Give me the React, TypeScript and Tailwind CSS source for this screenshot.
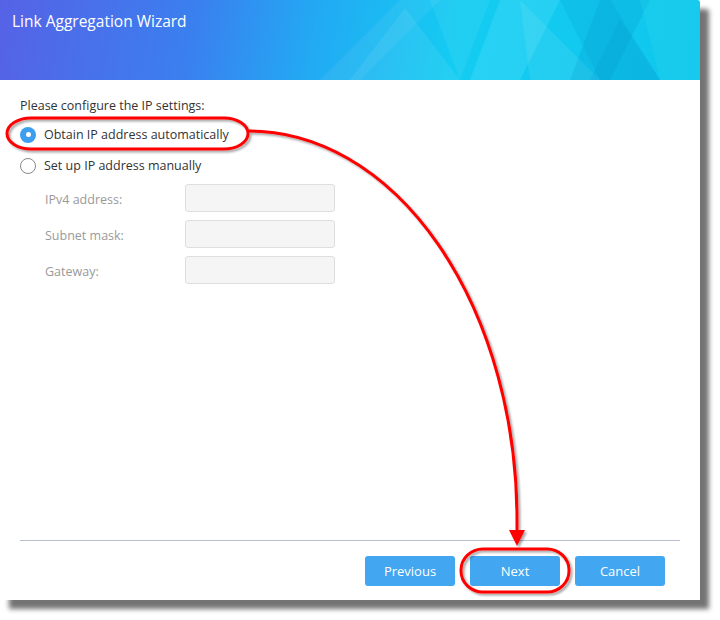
import React from "react";

function Radio({ checked, label }: { checked: boolean; label: string }) {
  return (
    <div className="flex items-center h-[31px]">
      {checked ? (
        <span className="w-4 h-4 rounded-full bg-[#3d9ef0] flex items-center justify-center">
          <span className="w-[5px] h-[5px] rounded-full bg-white" />
        </span>
      ) : (
        <span className="w-4 h-4 rounded-full border border-[#8a8a8a] bg-white" />
      )}
      <span className="ml-2 text-[12.5px] text-[#333] pt-[2px]">{label}</span>
    </div>
  );
}

function Field({ label }: { label: string }) {
  return (
    <div className="flex items-center h-[28px]">
      <span className="w-[165px] pl-[25px] pt-[4px] text-[12.5px] text-[#9a9a9a]">{label}</span>
      <div className="w-[150px] h-[28px] rounded-[3px] border border-[#dedede] bg-[#f5f5f5]" />
    </div>
  );
}

function Btn({ label }: { label: string }) {
  return (
    <button className="w-[90px] h-[30px] rounded-[3px] bg-[#42a6f0] text-white text-[13px] pt-[2px]">
      {label}
    </button>
  );
}

export default function App() {
  return (
    <div
      className="relative w-[720px] h-[620px] bg-white overflow-hidden"
      style={{ fontFamily: '"Open Sans", "Noto Sans", sans-serif' }}
    >
      <div className="w-[700px] h-[600px] bg-white flex flex-col shadow-[9px_9px_5px_rgba(0,0,0,0.55)] rounded-tr-[3px]">
        <div className="relative h-[80px] overflow-hidden rounded-tr-[3px] bg-[linear-gradient(100deg,#5662e6_0%,#3a80ef_28%,#22aaf3_45%,#14ccf2_65%,#0fc6ec_100%)]">
          <svg className="absolute inset-0" width="700" height="80" viewBox="0 0 700 80">
            <polygon points="400,0 440,0 360,80 320,80" fill="#ffffff" opacity="0.06" />
            <polygon points="405,8 460,80 350,80" fill="#ffffff" opacity="0.07" />
            <polygon points="430,0 490,0 460,80" fill="#ffffff" opacity="0.06" />
            <polygon points="500,0 560,0 520,80 470,80" fill="#7ff0ff" opacity="0.18" />
            <polygon points="520,0 600,80 530,80" fill="#ffffff" opacity="0.08" />
            <polygon points="560,0 610,0 660,80 600,80" fill="#0090c8" opacity="0.15" />
            <polygon points="600,0 650,0 610,80 570,80" fill="#0088c0" opacity="0.18" />
            <polygon points="640,0 700,0 700,80 660,80" fill="#30d8f0" opacity="0.25" />
            <polygon points="620,20 660,80 590,80" fill="#0090c8" opacity="0.15" />
          </svg>
          <div className="relative pl-3 pt-[10px] text-[15.5px] text-white">Link Aggregation Wizard</div>
        </div>

        <div className="flex-1 flex flex-col px-5 pt-[16px]">
          <div className="text-[12.5px] text-[#333] h-[20px] leading-[20px]">Please configure the IP settings:</div>
          <div className="flex flex-col mt-[3px]">
            <Radio checked label="Obtain IP address automatically" />
            <Radio checked={false} label="Set up IP address manually" />
          </div>
          <div className="flex flex-col gap-2 mt-[3px]">
            <Field label="IPv4 address:" />
            <Field label="Subnet mask:" />
            <Field label="Gateway:" />
          </div>
        </div>

        <div className="mx-5 border-t border-[#b9bdd0]" />
        <div className="h-[59px] flex justify-end items-start pt-[15px] pr-[35px] gap-[15px]">
          <Btn label="Previous" />
          <Btn label="Next" />
          <Btn label="Cancel" />
        </div>
      </div>

      <svg className="absolute inset-0 pointer-events-none" width="720" height="620" viewBox="0 0 720 620">
        <defs>
          <filter id="sh" x="-10%" y="-10%" width="130%" height="130%">
            <feDropShadow dx="2" dy="2" stdDeviation="1.2" floodColor="#000" floodOpacity="0.35" />
          </filter>
        </defs>
        <g filter="url(#sh)" fill="none" stroke="#ff0000" strokeWidth="3">
          <rect x="7" y="118" width="241" height="31" rx="24" ry="15.5" />
          <rect x="461" y="549" width="108" height="43" rx="22" ry="21" />
          <path d="M 249 131 A 268 389 0 0 1 517 520 L 517 531" />
          <polygon points="509,530 525,530 517,546" fill="#ff0000" stroke="none" />
        </g>
      </svg>
    </div>
  );
}
